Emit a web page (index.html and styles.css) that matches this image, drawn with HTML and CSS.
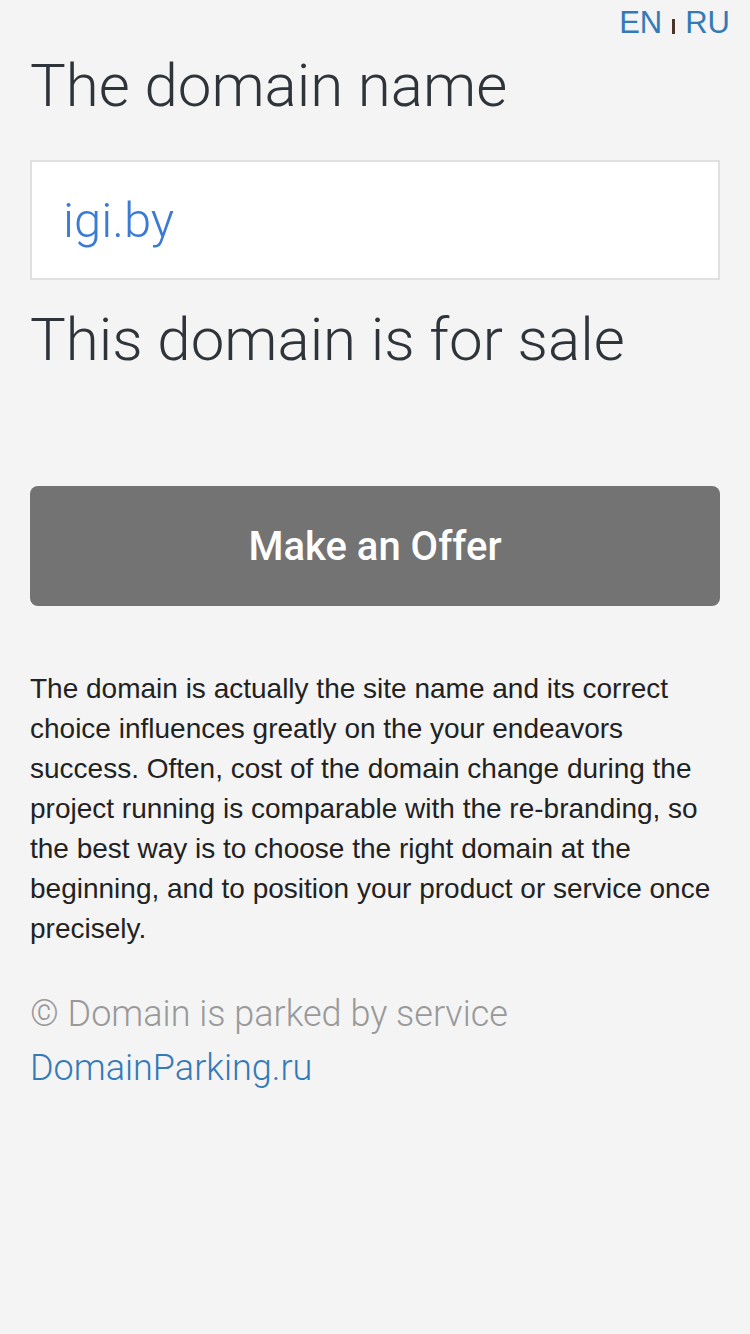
FILE: index.html
```html
<!DOCTYPE html>
<html lang="en">
<head>
    <meta charset="UTF-8">
    <meta name="viewport" content="width=device-width, initial-scale=1.0">
    <title>igi.by</title>
    <link rel="stylesheet" href="styles.css">
</head>
<body>
    <div class="lang">
        <a href="#">EN</a><span class="sep"></span><a href="#">RU</a>
    </div>

    <div class="container">
        <h1 class="title">The domain name</h1>

        <div class="domain-box">igi.by</div>

        <h2 class="sale">This domain is for sale</h2>

        <a class="offer-button" href="#">Make an Offer</a>

        <p class="about">The domain is actually the site name and its correct choice influences greatly on the your endeavors success. Often, cost of the domain change during the project running is comparable with the re-branding, so the best way is to choose the right domain at the beginning, and to position your product or service once precisely.</p>

        <div class="footer">
            &copy; Domain is parked by service<br>
            <a href="#">DomainParking.ru</a>
        </div>
    </div>
</body>
</html>
```

FILE: styles.css
```css
body {
    margin: 0;
    padding: 0;
    background-color: #f4f4f4;
    font-family: Roboto, "Liberation Sans", sans-serif;
    color: #2f343b;
}
.lang {
    display: flex;
    justify-content: flex-end;
    align-items: center;
    padding: 6px 20px 0 0;
    font-family: "Liberation Sans", Arial, sans-serif;
    font-size: 31px;
    line-height: 34px;
}
.lang a {
    color: #337ab7;
    text-decoration: none;
}
.lang .sep {
    display: inline-block;
    width: 3px;
    height: 15px;
    margin: 7px 10px 0 10px;
    background-color: #4a3527;
}
.container {
    padding: 0 30px;
}
.title {
    margin: 8px 0 0 0;
    font-size: 60px;
    font-weight: 300;
    line-height: 76px;
}
.domain-box {
    margin-top: 36px;
    height: 120px;
    box-sizing: border-box;
    padding: 0 31px;
    display: flex;
    align-items: center;
    background-color: #fff;
    border: 2px solid #e0e0e0;
    color: #3a7bd5;
    font-size: 49px;
    font-weight: 300;
}
.sale {
    margin: 22px 0 0 0;
    font-size: 60px;
    font-weight: 300;
    line-height: 76px;
}
.offer-button {
    display: flex;
    align-items: center;
    justify-content: center;
    margin-top: 108px;
    height: 120px;
    background-color: #737373;
    border-radius: 8px;
    color: #fff;
    font-size: 40px;
    font-weight: 500;
    text-decoration: none;
}
.about {
    margin: 63px 0 0 0;
    font-family: "Liberation Sans", Arial, sans-serif;
    font-size: 28px;
    line-height: 40px;
    color: #222;
}
.footer {
    margin-top: 38px;
    font-size: 36px;
    font-weight: 300;
    line-height: 54px;
    color: #999;
}
.footer a {
    color: #337ab7;
    text-decoration: none;
}
```
